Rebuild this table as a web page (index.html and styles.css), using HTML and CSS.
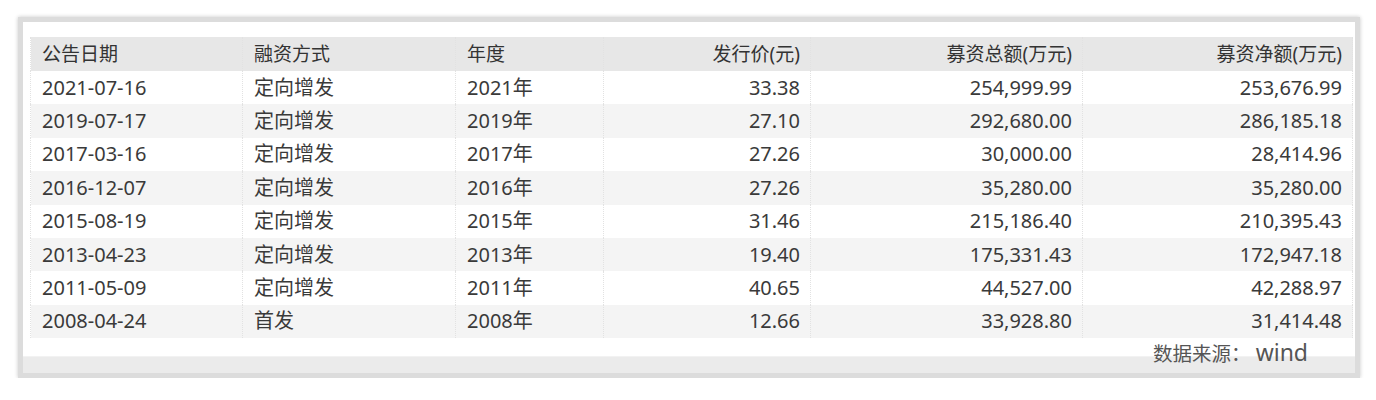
FILE: index.html
```html
<!DOCTYPE html>
<html lang="zh-CN">
<head>
<meta charset="utf-8">
<title>募资记录</title>
<link rel="stylesheet" href="styles.css">
</head>
<body>
<div class="frame">
  <table class="data">
    <colgroup>
      <col class="c1"><col class="c2"><col class="c3"><col class="c4"><col class="c5"><col class="c6">
    </colgroup>
    <thead>
      <tr>
        <th class="l">公告日期</th>
        <th class="l">融资方式</th>
        <th class="l">年度</th>
        <th class="r">发行价(元)</th>
        <th class="r">募资总额(万元)</th>
        <th class="r">募资净额(万元)</th>
      </tr>
    </thead>
    <tbody>
      <tr><td>2021-07-16</td><td>定向增发</td><td>2021年</td><td class="r">33.38</td><td class="r">254,999.99</td><td class="r">253,676.99</td></tr>
      <tr><td>2019-07-17</td><td>定向增发</td><td>2019年</td><td class="r">27.10</td><td class="r">292,680.00</td><td class="r">286,185.18</td></tr>
      <tr><td>2017-03-16</td><td>定向增发</td><td>2017年</td><td class="r">27.26</td><td class="r">30,000.00</td><td class="r">28,414.96</td></tr>
      <tr><td>2016-12-07</td><td>定向增发</td><td>2016年</td><td class="r">27.26</td><td class="r">35,280.00</td><td class="r">35,280.00</td></tr>
      <tr><td>2015-08-19</td><td>定向增发</td><td>2015年</td><td class="r">31.46</td><td class="r">215,186.40</td><td class="r">210,395.43</td></tr>
      <tr><td>2013-04-23</td><td>定向增发</td><td>2013年</td><td class="r">19.40</td><td class="r">175,331.43</td><td class="r">172,947.18</td></tr>
      <tr><td>2011-05-09</td><td>定向增发</td><td>2011年</td><td class="r">40.65</td><td class="r">44,527.00</td><td class="r">42,288.97</td></tr>
      <tr><td>2008-04-24</td><td>首发</td><td>2008年</td><td class="r">12.66</td><td class="r">33,928.80</td><td class="r">31,414.48</td></tr>
    </tbody>
  </table>
  <div class="source">数据来源： <span class="source-name">wind</span></div>
  <div class="scrollbar"></div>
</div>
</body>
</html>
```

FILE: styles.css
```css
html, body {
  margin: 0;
  padding: 0;
  background: #ffffff;
}

body {
  font-family: "Noto Sans", "Noto Sans CJK SC", sans-serif;
  color: #3a3a3a;
}

.frame {
  box-sizing: border-box;
  margin: 17px 0 0 18px;
  width: 1342px;
  height: 361px;
  border: 5px solid #dcdcdc;
  padding: 15px 3px 0 7px;
  background: #ffffff;
  box-shadow: 0 0 4px rgba(0, 0, 0, 0.22);
}

.data {
  width: 1322px;
  border-collapse: collapse;
  table-layout: fixed;
  font-size: 20px;
}

.c1 { width: 212px; }
.c2 { width: 213px; }
.c3 { width: 148px; }
.c4 { width: 207px; }
.c5 { width: 272px; }
.c6 { width: 270px; }

.data th,
.data td {
  padding: 0 10px 0 11px;
  white-space: nowrap;
  border-left: 1px dotted #e2e2e2;
  border-right: 1px dotted #e2e2e2;
  text-align: left;
  font-weight: normal;
  line-height: 20px;
}

.data th {
  height: 34px;
  background: #e7e7e7;
  color: #333333;
  font-size: 19px;
}

.data td {
  height: 33.4px;
}

.data tbody tr:nth-child(even) td {
  background: #f4f4f4;
}

.data .r {
  text-align: right;
}

.source {
  height: 18px;
  line-height: 28px;
  font-size: 19.5px;
  color: #555555;
  text-align: right;
  padding-right: 44px;
  white-space: nowrap;
}

.source-name {
  font-size: 23px;
}

.scrollbar {
  height: 17px;
  margin: 0 -3px 0 -7px;
  background: #ebebeb;
  border-top: 1px solid #f2f2f2;
  box-sizing: border-box;
}
```
